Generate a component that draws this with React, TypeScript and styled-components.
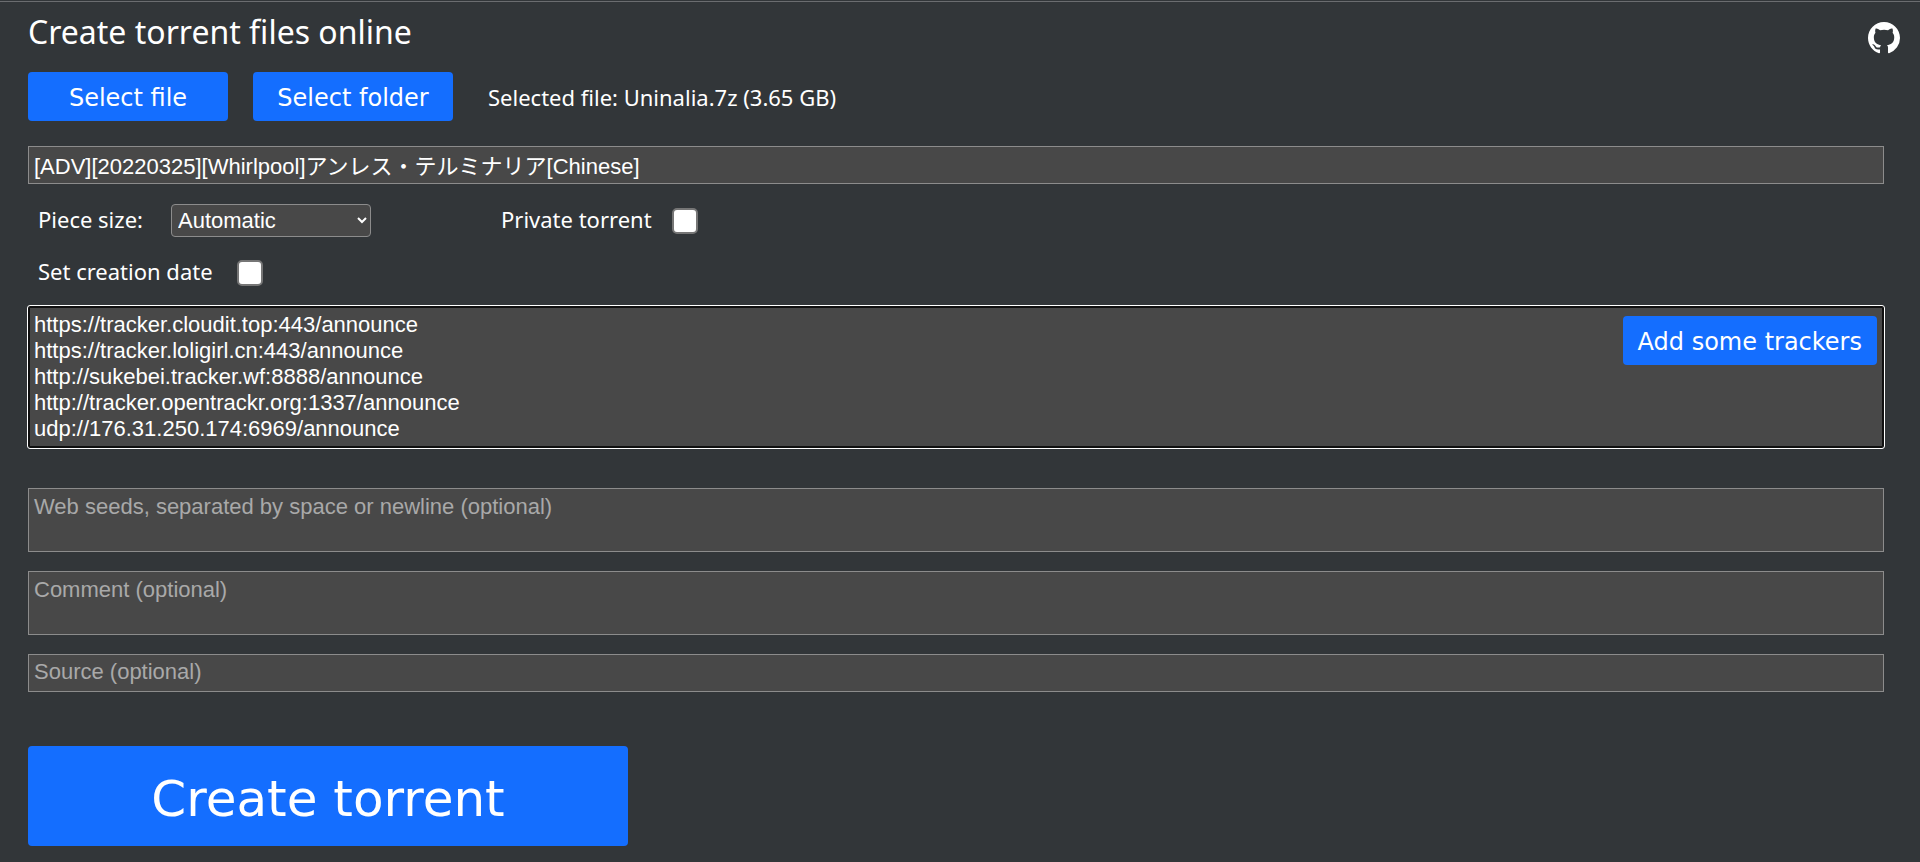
import React from 'react';
import styled, { createGlobalStyle, css } from 'styled-components';

const GlobalStyle = createGlobalStyle`
  *, *::before, *::after { box-sizing: border-box; }
  body {
    margin: 0;
    background: #323639;
    color: #fff;
    font: 22px/30px "Noto Sans", "Open Sans", sans-serif;
  }
`;

const Page = styled.main`
  position: relative;
  margin-top: 1px;
  min-height: calc(100vh - 1px);
  padding: 8px 36px 16px 28px;
  border-top: 1px solid #6b6d70;
`;

const Title = styled.h1`
  margin: 0 0 18px;
  font-size: 32px;
  line-height: 44px;
  font-weight: 400;
`;

const GithubLink = styled.a`
  position: absolute;
  top: 20px;
  right: 20px;
  display: block;
  width: 32px;
  height: 32px;
  color: #fff;

  svg { display: block; }
`;

const Form = styled.form`
  display: flex;
  flex-direction: column;
`;

const FileRow = styled.div`
  display: flex;
  align-items: center;
  margin-bottom: 25px;
`;

const Button = styled.button<{ $size?: 'auto' | 'large' }>`
  width: 200px;
  height: 49px;
  margin-right: 25px;
  padding: 2px 12px 0;
  border: 0;
  border-radius: 4px;
  background: #146eff;
  color: #fff;
  font: 24px/30px "DejaVu Sans", sans-serif;
  cursor: pointer;

  ${({ $size }) => $size === 'auto' && css`
    width: auto;
    margin: 0;
    padding: 2px 15px 0;
  `}
  ${({ $size }) => $size === 'large' && css`
    width: 600px;
    height: 100px;
    margin: 54px 0 0;
    padding-top: 6px;
    font-size: 50px;
    line-height: 60px;
  `}
`;

const Selected = styled.output`
  margin-left: 10px;
`;

const field = css`
  display: block;
  width: 100%;
  margin: 0;
  padding: 5px;
  border: 1px solid #8c8c8c;
  border-radius: 0;
  background: #484848;
  color: #fff;
  font: 22px/26px "Liberation Sans", Arial, "Noto Sans CJK JP", sans-serif;

  &::placeholder { color: #a9a9a9; opacity: 1; }
`;

const TextField = styled.input`
  ${field}
  height: 38px;
  padding: 4px 5px 6px;
`;

const TextArea = styled.textarea`
  ${field}
  height: 64px;
  resize: none;
`;

const TrackerArea = styled(TextArea)`
  height: 142px;
  border-color: #101010;
  border-radius: 2px;
  outline: 1px solid #fff;
  box-shadow: inset 0 0 0 1px #101010;
  overflow: hidden;
`;

const Trackers = styled.div`
  position: relative;
  margin-bottom: 40px;
`;

const TrackerAction = styled.div`
  position: absolute;
  top: 10px;
  right: 7px;
`;

const Options = styled.div`
  display: flex;
  flex-wrap: wrap;
  align-items: center;
  margin: 19px 0 17px 10px;
`;

const Option = styled.label<{ $wide?: boolean }>`
  display: flex;
  align-items: center;
  gap: 20px;
  flex: 0 0 ${({ $wide }) => ($wide ? '100%' : '463px')};
  height: 34px;
  margin-bottom: ${({ $wide }) => ($wide ? '0' : '18px')};
`;

const OptionText = styled.span<{ $width: number }>`
  min-width: ${({ $width }) => $width}px;
  padding-bottom: 2px;
`;

const Select = styled.select`
  width: 200px;
  height: 33px;
  padding: 0 2px;
  border: 1px solid #8c8c8c;
  border-radius: 4px;
  background: #484848;
  color: #fff;
  font: 22px/26px "Liberation Sans", Arial, sans-serif;
`;

const Checkbox = styled.input`
  appearance: none;
  width: 26px;
  height: 26px;
  margin: 2px 0 0;
  border: 2px solid #767676;
  border-radius: 5px;
  background: #fff;

  &:checked { background: #146eff; }
`;

const Optional = styled.div`
  display: flex;
  flex-direction: column;
  gap: 19px;
`;

const TRACKERS = [
  'https://tracker.cloudit.top:443/announce',
  'https://tracker.loligirl.cn:443/announce',
  'http://sukebei.tracker.wf:8888/announce',
  'http://tracker.opentrackr.org:1337/announce',
  'udp://176.31.250.174:6969/announce',
].join('\n');

const GithubMark = () => (
  <svg width="32" height="32" viewBox="0 0 16 16" fill="currentColor" aria-hidden="true">
    <path
      fillRule="evenodd"
      d="M8 0C3.58 0 0 3.58 0 8c0 3.54 2.29 6.53 5.47 7.59.4.07.55-.17.55-.38 0-.19-.01-.82-.01-1.49-2.01.37-2.53-.49-2.69-.94-.09-.23-.48-.94-.82-1.13-.28-.15-.68-.52-.01-.53.63-.01 1.08.58 1.23.82.72 1.21 1.87.87 2.33.66.07-.52.28-.87.51-1.07-1.78-.2-3.64-.89-3.64-3.95 0-.87.31-1.59.82-2.15-.08-.2-.36-1.02.08-2.12 0 0 .67-.21 2.2.82.64-.18 1.32-.27 2-.27s1.36.09 2 .27c1.53-1.04 2.2-.82 2.2-.82.44 1.1.16 1.92.08 2.12.51.56.82 1.27.82 2.15 0 3.07-1.87 3.75-3.65 3.95.29.25.54.73.54 1.48 0 1.07-.01 1.93-.01 2.2 0 .21.15.46.55.38A8.01 8.01 0 0 0 16 8c0-4.42-3.58-8-8-8z"
    />
  </svg>
);

export default function App() {
  return (
    <>
      <GlobalStyle />
      <Page>
        <Title>Create torrent files online</Title>
        <GithubLink href="#github" aria-label="GitHub">
          <GithubMark />
        </GithubLink>
        <Form onSubmit={(e) => e.preventDefault()}>
          <FileRow>
            <Button type="button">Select file</Button>
            <Button type="button">Select folder</Button>
            <Selected>Selected file: Uninalia.7z (3.65 GB)</Selected>
          </FileRow>
          <TextField
            aria-label="Torrent name"
            defaultValue="[ADV][20220325][Whirlpool]アンレス・テルミナリア[Chinese]"
          />
          <Options>
            <Option>
              <OptionText $width={113}>Piece size:</OptionText>
              <Select defaultValue="auto">
                <option value="auto">Automatic</option>
              </Select>
            </Option>
            <Option>
              <OptionText $width={150}>Private torrent</OptionText>
              <Checkbox type="checkbox" />
            </Option>
            <Option $wide>
              <OptionText $width={179}>Set creation date</OptionText>
              <Checkbox type="checkbox" />
            </Option>
          </Options>
          <Trackers>
            <TrackerArea aria-label="Trackers" defaultValue={TRACKERS} spellCheck={false} />
            <TrackerAction>
              <Button type="button" $size="auto">Add some trackers</Button>
            </TrackerAction>
          </Trackers>
          <Optional>
            <TextArea
              aria-label="Web seeds"
              placeholder="Web seeds, separated by space or newline (optional)"
            />
            <TextArea aria-label="Comment" placeholder="Comment (optional)" />
            <TextField aria-label="Source" placeholder="Source (optional)" />
          </Optional>
          <Button type="submit" $size="large">Create torrent</Button>
        </Form>
      </Page>
    </>
  );
}
